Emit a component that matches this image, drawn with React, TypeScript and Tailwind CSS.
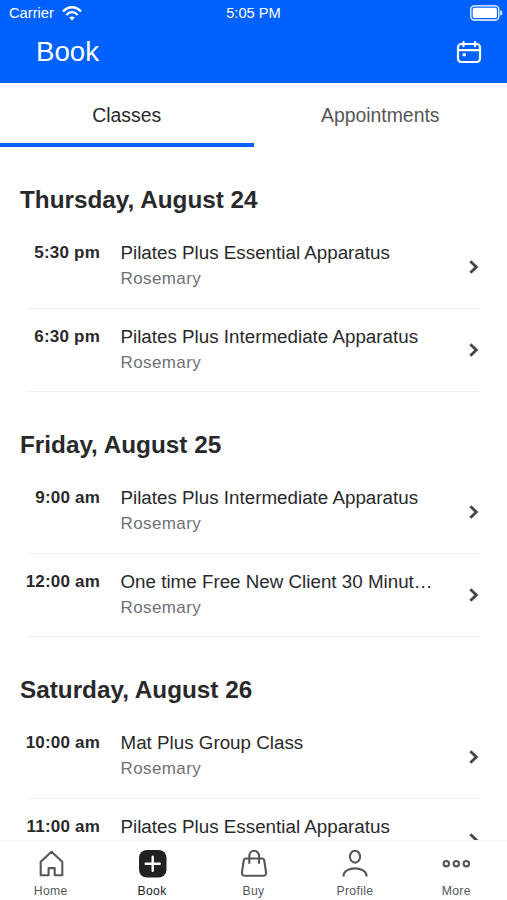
import type { ReactNode } from 'react';

type Session = { time: string; title: string; teacher?: string };
type Day = { date: string; sessions: Session[] };

const days: Day[] = [
  {
    date: 'Thursday, August 24',
    sessions: [
      { time: '5:30 pm', title: 'Pilates Plus Essential Apparatus', teacher: 'Rosemary' },
      { time: '6:30 pm', title: 'Pilates Plus Intermediate Apparatus', teacher: 'Rosemary' },
    ],
  },
  {
    date: 'Friday, August 25',
    sessions: [
      { time: '9:00 am', title: 'Pilates Plus Intermediate Apparatus', teacher: 'Rosemary' },
      { time: '12:00 am', title: 'One time Free New Client 30 Minut…', teacher: 'Rosemary' },
    ],
  },
  {
    date: 'Saturday, August 26',
    sessions: [
      { time: '10:00 am', title: 'Mat Plus Group Class', teacher: 'Rosemary' },
      { time: '11:00 am', title: 'Pilates Plus Essential Apparatus' },
    ],
  },
];

function Wifi() {
  return (
    <svg width="20" height="15" viewBox="0 0 20 15" fill="none" stroke="white" strokeWidth="2.3">
      <path d="M1 5.600C6-.2 14-.2 19 5.600" />
      <path d="M4.400 8.900c3.200-3.600 8-3.600 11.200 0" />
      <path d="M7.300 11.800 10 14.600l2.700-2.800c-1.400-1.800-4-1.800-5.400 0Z" fill="white" stroke="none" />
    </svg>
  );
}

function Battery() {
  return (
    <svg width="33" height="16" viewBox="0 0 33 16">
      <rect x=".8" y=".8" width="28" height="14.2" rx="3.6" fill="none" stroke="white" strokeWidth="1.3" />
      <rect x="2.7" y="2.8" width="24.2" height="10.2" rx="1.6" fill="white" />
      <path d="M30.3 5.300c2.600.7 2.600 4.600 0 5.300Z" fill="white" />
    </svg>
  );
}

function Calendar() {
  return (
    <svg width="26" height="24" viewBox="0 0 26 24" fill="none" stroke="white" strokeWidth="2.2" strokeLinecap="round">
      <rect x="2" y="4" width="22" height="18" rx="3.2" />
      <path d="M2 10.200h22M7.500 2v4.200M19 2v4.200" />
      <circle cx="8.200" cy="14.700" r="1.800" fill="white" stroke="none" />
    </svg>
  );
}

function Chevron() {
  return (
    <svg className="mt-[34.5px] mr-px shrink-0" width="10" height="14" viewBox="0 0 10 14" fill="none" stroke="#484848" strokeWidth="2.9">
      <path d="m1.300 1.300 6 5.700-6 5.700" />
    </svg>
  );
}

function NavItem({ label, active, children }: { label: string; active?: boolean; children: ReactNode }) {
  return (
    <a className={`flex flex-1 flex-col items-center ${active ? 'text-[#202124]' : 'text-[#55575a]'}`}>
      <svg className="mt-2" width="30" height="30" viewBox="0 0 30 30" fill="none" stroke="currentColor" strokeWidth="2.1" strokeLinejoin="round">
        {children}
      </svg>
      <span className="mt-1 text-[12.2px] leading-4 tracking-[0.35px]">{label}</span>
    </a>
  );
}

export default function App() {
  return (
    <div className="flex h-[900px] w-[507px] flex-col overflow-hidden bg-white font-['Liberation_Sans',Arial,sans-serif] text-[#29292b]">
      <header className="h-[83px] shrink-0 bg-[#0061ff] text-white">
        <div className="grid h-6 grid-cols-3 items-center text-[14.7px] leading-6">
          <div className="flex items-center gap-2 pt-px pl-[9px]">
            <span>Carrier</span>
            <Wifi />
          </div>
          <span className="text-center">5:05 PM</span>
          <div className="flex justify-end pt-px pr-1">
            <Battery />
          </div>
        </div>
        <div className="flex items-center justify-between pt-2 pr-[25px] pl-[36px]">
          <h1 className="text-[27.7px] leading-10">Book</h1>
          <Calendar />
        </div>
      </header>

      <div className="grid h-16 shrink-0 grid-cols-2 text-center text-[19.4px] leading-[64px]">
        <div className="h-16 border-b-4 border-[#0861f5]">Classes</div>
        <div className="h-16 text-[#56565a]">Appointments</div>
      </div>

      <main className="min-h-0 flex-1 overflow-hidden">
        {days.map((day) => (
          <section key={day.date} className="h-[245px]">
            <h2 className="h-[78px] pt-[37px] pl-5 text-[24.3px] leading-8 font-bold">{day.date}</h2>
            {day.sessions.map((session) => (
              <div key={session.time} className="mr-[27px] ml-[27px] flex h-[83.5px] border-b border-[#f0f0f0]">
                <div className="-ml-[7px] w-[80px] shrink-0 pt-[18px] text-right text-[17px] leading-5 font-bold tracking-[0.2px]">{session.time}</div>
                <div className="ml-[20.5px] flex-1 pt-4 whitespace-nowrap">
                  <div className="text-[18.8px] leading-6">{session.title}</div>
                  {session.teacher && (
                    <div className="mt-[2px] text-[17px] leading-6 tracking-[0.4px] text-[#6f7175]">{session.teacher}</div>
                  )}
                </div>
                <Chevron />
              </div>
            ))}
          </section>
        ))}
      </main>

      <nav className="flex h-[60px] shrink-0 border-t border-[#f8f8f8] bg-white">
        <NavItem label="Home">
          <path d="M4.700 12.800 15.500 2.800l10.800 10v13.500h-7.600v-7.200h-6.100v7.200H4.700Z" />
        </NavItem>
        <NavItem label="Book" active>
          <rect x="2" y="1" width="27.500" height="27.500" rx="7.800" fill="currentColor" stroke="none" />
          <path d="M15.700 7.800v14M8.700 14.800h14" stroke="white" strokeWidth="2.400" strokeLinecap="round" />
        </NavItem>
        <NavItem label="Buy">
          <path d="M7 9.500h16q2 0 2.300 2L27 23.200q.4 3.600-3 3.600H6q-3.400 0-3-3.600l1.700-11.700q.3-2 2.300-2Z" />
          <path d="M10.300 14.800V7.500c0-7.600 9.800-7.600 9.800 0v7.300" />
        </NavItem>
        <NavItem label="Profile">
          <ellipse cx="15" cy="7.700" rx="5.100" ry="5.900" />
          <path d="M3.500 27.500v-1.200c1-9.200 22-9.200 23 0v1.200" />
        </NavItem>
        <NavItem label="More">
          <circle cx="5.300" cy="14.700" r="2.700" />
          <circle cx="15.300" cy="14.700" r="2.700" />
          <circle cx="25.300" cy="14.700" r="2.700" />
        </NavItem>
      </nav>
    </div>
  );
}
